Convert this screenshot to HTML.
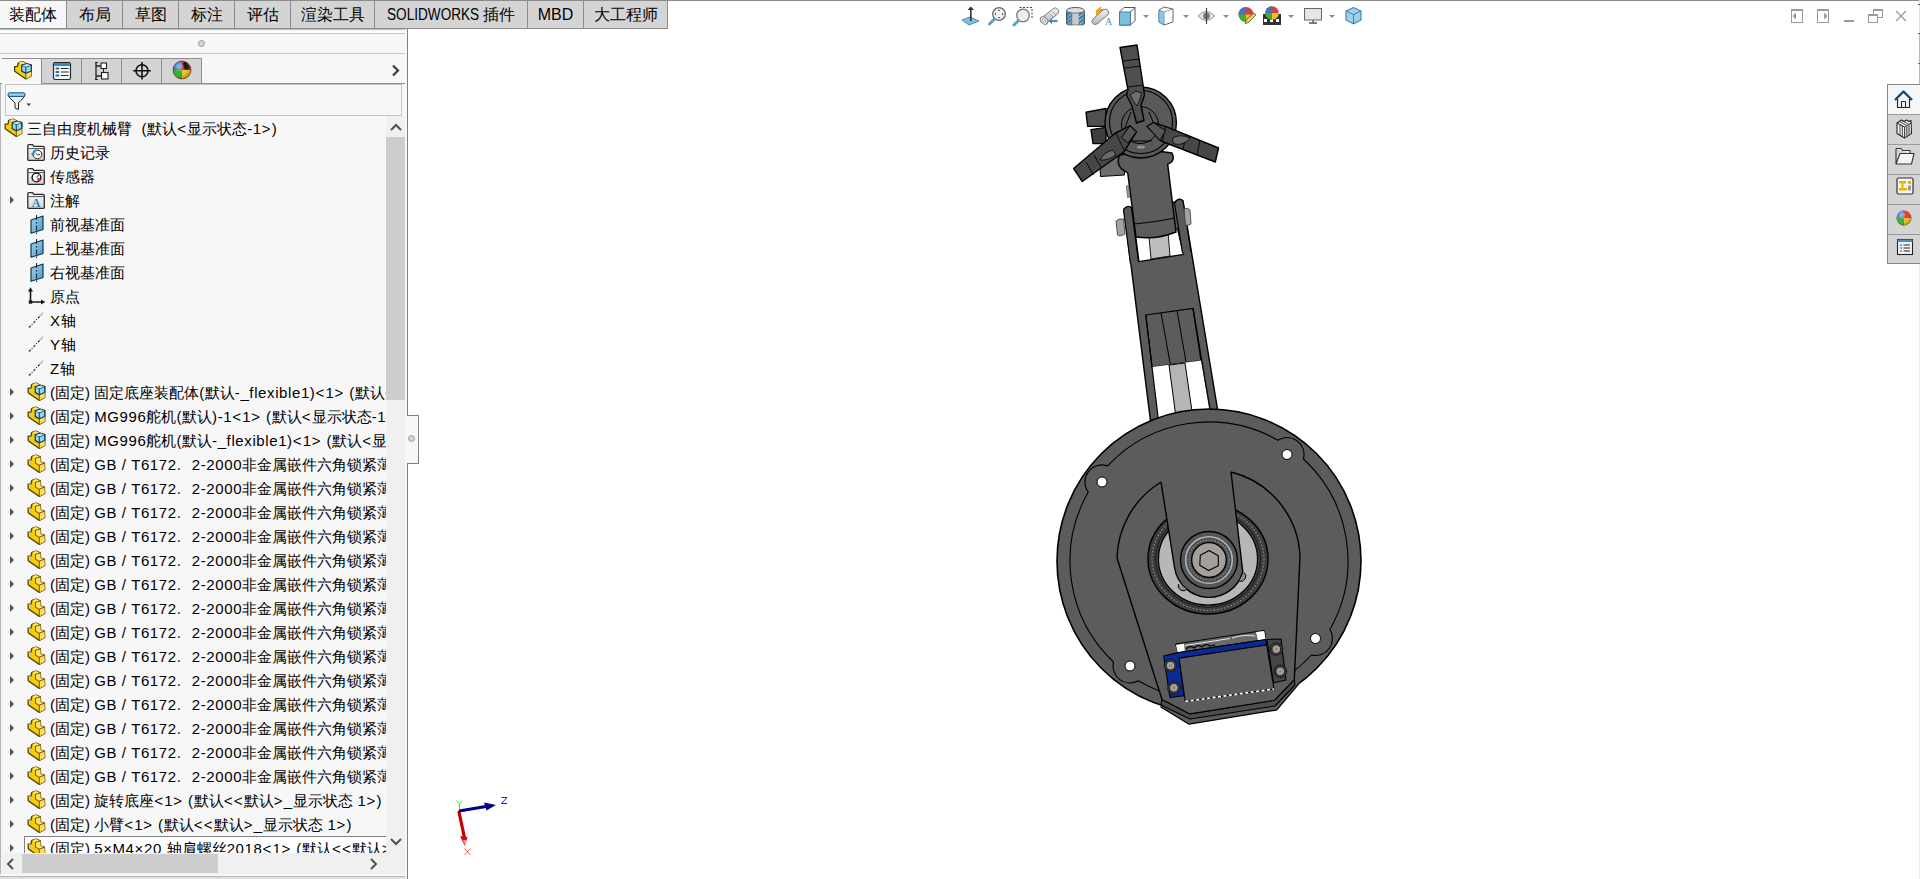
<!DOCTYPE html>
<html><head><meta charset="utf-8">
<style>
*{box-sizing:border-box}
html,body{margin:0;padding:0;width:1920px;height:879px;overflow:hidden;background:#fff;font-family:"Liberation Sans",sans-serif;color:#000}
.abs{position:absolute}
#topline{left:0;top:0;width:1920px;height:1px;background:#8a8a8a}
.tab{position:absolute;top:0;height:29px;background:#d4d4d4;border:1px solid #8c8c8c;border-left:1px solid #8c8c8c;font-size:16px;line-height:27px;text-align:center;white-space:nowrap}
#panel{left:0;top:28px;width:408px;height:851px;background:#f7f7f7;border-right:1px solid #808080;overflow:hidden}
#tree{position:absolute;left:0;top:0;width:386px;height:853px;overflow:hidden}
#tree .t{position:absolute;height:24px;font-size:15px;line-height:24px;white-space:nowrap}
#tree .ar{position:absolute;left:10px;width:0;height:0;border-left:4px solid #555;border-top:4px solid transparent;border-bottom:4px solid transparent}
#tree .ic{position:absolute;overflow:visible}
#tree .focus{position:absolute;left:24px;width:380px;height:30px;background:#fff;border:1px solid #808080}
#tree .l{letter-spacing:0.6px}
#tree .p{letter-spacing:1.3px}
.hl{position:absolute;height:1px}
</style></head><body>
<svg width="0" height="0" style="position:absolute">
<defs>
<linearGradient id="gy" x1="0" y1="0" x2="1" y2="1"><stop offset="0" stop-color="#ffe77a"/><stop offset="1" stop-color="#f2c200"/></linearGradient>
<linearGradient id="gb" x1="0" y1="0" x2="1" y2="1"><stop offset="0" stop-color="#9fd3ee"/><stop offset="1" stop-color="#4f9ac2"/></linearGradient>
<linearGradient id="gf" x1="0" y1="0" x2="0" y2="1"><stop offset="0" stop-color="#fafafa"/><stop offset="1" stop-color="#d8d8d8"/></linearGradient>
<symbol id="i-part" viewBox="0 0 18 18" overflow="visible">
 <path d="M1.1 5.2 L4.1 4.9 L4.4 2.2 L5.2 1.1 L9 0.1 L13.4 1.9 L13.7 7.1 L17.5 8.2 L17.8 14.5 L12.3 17.5 L1.2 9.8 Z" fill="#f3cc10" stroke="#4a3500" stroke-width="1.2" stroke-linejoin="round"/>
 <path d="M5.2 1.1 L9 0.1 L13.4 1.9 L8.5 3.3 Z" fill="#fbe27a"/>
 <path d="M8.5 3.3 L13.4 1.9 L13.7 7.1 L8.5 8.2 Z" fill="#f9e35a"/>
 <path d="M8.5 8.2 L13.7 7.1 L17.5 8.2 L12.3 10.1 Z" fill="#fbe78a"/>
 <path d="M12.3 10.1 L17.5 8.2 L17.8 14.5 L12.3 17.5 Z" fill="#f7df58"/>
 <path d="M1.1 5.2 L2.6 6 L4.1 4.9" fill="#fbe27a"/>
 <path d="M8.5 3.3 L8.5 8.2 L12.3 10.1 L12.3 17.5 M8.5 3.3 L13.4 1.9 M12.3 10.1 L17.5 8.2" fill="none" stroke="#6a4a00" stroke-width="0.9"/>
</symbol>
<symbol id="i-asm" viewBox="0 0 18 18" overflow="visible">
 <path d="M1.1 5.2 L4.1 4.9 L4.4 2.2 L5.2 1.1 L9 0.1 L13.4 2.2 L17.8 3.6 L17.8 14.5 L12.3 17.5 L1.2 9.8 Z" fill="#f3cc10" stroke="#4a3500" stroke-width="1.2" stroke-linejoin="round"/>
 <path d="M5.2 1.1 L9 0.1 L13.4 2.2 L8.2 3.6 Z" fill="#fbe27a"/>
 <path d="M12.3 11.8 L17.8 9.5 L17.8 14.5 L12.3 17.5 Z" fill="#f7df58"/>
 <path d="M12.3 11.8 L12.3 17.5" stroke="#6a4a00" stroke-width="0.9"/>
 <path d="M8.2 3.6 L13.4 2.2 L17.8 3.6 L17.8 9.5 L12.3 11.8 L8.2 9.6 Z" fill="#9dd2ec" stroke="#083d63" stroke-width="1.2" stroke-linejoin="round"/>
 <path d="M8.2 3.6 L12.3 5.6 L17.8 3.6 M12.3 5.6 L12.3 11.8" fill="none" stroke="#083d63" stroke-width="1"/>
 <path d="M8.7 4.2 L13.4 2.6 L17.2 3.7 L12.3 5.2 Z" fill="#c4e6f6"/>
</symbol>
<symbol id="i-folder" viewBox="0 0 18 17">
 <path d="M0.8 2 Q0.8 0.7 2 0.7 L5.6 0.7 L6.8 2.4 L16 2.4 Q17.3 2.4 17.3 3.6 L17.3 15.5 Q17.3 16.3 16.5 16.3 L1.6 16.3 Q0.8 16.3 0.8 15.5 Z" fill="url(#gf)" stroke="#2a2a2a" stroke-width="1.3"/>
 <path d="M1.2 4.6 L17 4.6" stroke="#555" stroke-width="1"/>
</symbol>
<symbol id="i-plane" viewBox="0 0 14 19">
 <path d="M1 5 L13 1 L13 14.5 L1 18.3 Z" fill="url(#gb)" stroke="#083a5a" stroke-width="1.2" stroke-linejoin="round"/>
 <path d="M6.6 0 L6.6 19" stroke="#1a1a1a" stroke-width="1" stroke-dasharray="5 2 1.5 2"/>
</symbol>
<symbol id="i-origin" viewBox="0 0 19 19" overflow="visible">
 <path d="M3.5 3 L3.5 15 L15 15" fill="none" stroke="#1a1a1a" stroke-width="1.6"/>
 <path d="M1 4.5 L3.5 0.3 L6 4.5 Z M14 12.4 L18.3 15 L14 17.6 Z" fill="#1a1a1a"/>
 <rect x="1.8" y="13.3" width="3.4" height="3.4" fill="#1a1a1a"/>
</symbol>
<symbol id="i-axis" viewBox="0 0 16 16">
 <path d="M1 15.5 L15 1" stroke="#222" stroke-width="1.1" stroke-dasharray="2.5 1.5 1 1.5"/>
</symbol>
</defs></svg>

<div id="topline" class="abs"></div>
<div id="panel" class="abs">
  <div class="hl" style="left:0;top:1px;width:405px;background:#a6c3ca"></div>
  <div class="hl" style="left:0;top:2px;width:405px;height:3px;background:#fcfcfc"></div>
  <div class="hl" style="left:0;top:5px;width:405px;background:#c6c6c6"></div>
  <div class="abs" style="left:198px;top:12px;width:7px;height:7px;border-radius:50%;background:#d4d4d4;border:1px solid #9a9a9a"></div>
  <div class="hl" style="left:0;top:25px;width:405px;background:#c6c6c6"></div>
</div>
<div class="abs" style="left:0;top:0;width:408px;height:879px;overflow:hidden">
  <!-- icon tabs -->
  <div class="abs" style="left:2px;top:58px;width:40px;height:26px;background:#f7f7f7;border-top:1px solid #8e8e8e"></div>
  <div class="hl" style="left:0;top:83px;width:2px;background:#8e8e8e"></div>
  <div class="abs" style="left:41px;top:58px;width:41px;height:26px;background:#d4d4d4;border:1px solid #8e8e8e"></div>
  <div class="abs" style="left:81px;top:58px;width:41px;height:26px;background:#d4d4d4;border:1px solid #8e8e8e"></div>
  <div class="abs" style="left:121px;top:58px;width:41px;height:26px;background:#d4d4d4;border:1px solid #8e8e8e"></div>
  <div class="abs" style="left:161px;top:58px;width:41px;height:26px;background:#d4d4d4;border:1px solid #8e8e8e"></div>
  <div class="hl" style="left:41px;top:83px;width:364px;background:#8e8e8e"></div>
  <!-- chevron right -->
  <svg class="abs" style="left:391px;top:63px" width="10" height="14"><path d="M2 2.5 L7 7.5 L2 12.5" fill="none" stroke="#3c3c3c" stroke-width="2.2"/></svg>
  <!-- filter box -->
  <div class="abs" style="left:5px;top:84px;width:397px;height:32px;border:1px solid #c4c4c4;background:#f7f7f7"></div>
  <div class="abs" style="left:0;top:84px;width:1px;height:790px;background:#b4b4b4"></div>
  <!-- tree -->
  <div id="tree" style="position:absolute;left:2px;top:116px;width:384px;height:737px;overflow:hidden">
    <div style="position:absolute;left:-2px;top:-116px;width:386px;height:879px">
<svg class="ic" style="left:4px;top:119px" width="18" height="18"><use href="#i-asm"/></svg><span class="t" style="top:117px;left:27px">三自由度机械臂<span class="l">&nbsp;</span><span class="l"> </span><span class="l">(</span>默认<span class="p">&lt;</span>显示状态<span class="l">-</span><span class="l">1</span><span class="p">&gt;</span><span class="l">)</span></span>
<svg class="ic" style="left:27px;top:144px" width="18" height="17"><use href="#i-folder"/><circle cx="10.5" cy="10.5" r="4.3" fill="#fff" stroke="#222" stroke-width="1"/><path d="M8.5 9 L10.5 10.8 L13 10.8" fill="none" stroke="#222" stroke-width="0.9"/><path d="M6 9.5 A4.5 4.5 0 0 1 9.5 6.2" fill="none" stroke="#2d86b8" stroke-width="1.8"/><path d="M3.8 9.6 L8.2 9.6 L6 12.6 Z" fill="#2d86b8"/></svg><span class="t" style="top:141px;left:50px">历史记录</span>
<svg class="ic" style="left:27px;top:168px" width="18" height="17"><use href="#i-folder"/><circle cx="9.5" cy="9.5" r="4.4" fill="#fff" stroke="#111" stroke-width="1.4"/><path d="M9.5 9.5 L12.3 6.3" stroke="#2d86b8" stroke-width="1.2"/><circle cx="11.8" cy="11.6" r="1.6" fill="#e8220a"/></svg><span class="t" style="top:165px;left:50px">传感器</span>
<svg class="ic" style="left:27px;top:192px" width="18" height="17"><use href="#i-folder"/><text x="9.2" y="15" font-family="Liberation Serif" font-size="12" font-weight="bold" fill="#2a7fb0" text-anchor="middle">A</text></svg><b class="ar" style="top:196px"></b><span class="t" style="top:189px;left:50px">注解</span>
<svg class="ic" style="left:30px;top:215px" width="14" height="19"><use href="#i-plane"/></svg><span class="t" style="top:213px;left:50px">前视基准面</span>
<svg class="ic" style="left:30px;top:239px" width="14" height="19"><use href="#i-plane"/></svg><span class="t" style="top:237px;left:50px">上视基准面</span>
<svg class="ic" style="left:30px;top:263px" width="14" height="19"><use href="#i-plane"/></svg><span class="t" style="top:261px;left:50px">右视基准面</span>
<svg class="ic" style="left:27px;top:287px" width="19" height="19"><use href="#i-origin"/></svg><span class="t" style="top:285px;left:50px">原点</span>
<svg class="ic" style="left:28px;top:312px" width="16" height="16"><use href="#i-axis"/></svg><span class="t" style="top:309px;left:50px"><span class="l">X</span>轴</span>
<svg class="ic" style="left:28px;top:336px" width="16" height="16"><use href="#i-axis"/></svg><span class="t" style="top:333px;left:50px"><span class="l">Y</span>轴</span>
<svg class="ic" style="left:28px;top:360px" width="16" height="16"><use href="#i-axis"/></svg><span class="t" style="top:357px;left:50px"><span class="l">Z</span>轴</span>
<svg class="ic" style="left:27px;top:383px" width="18" height="18"><use href="#i-asm"/></svg><b class="ar" style="top:388px"></b><span class="t" style="top:381px;left:50px">(固定) 固定底座装配体<span class="l">(</span>默认<span class="l">-</span><span class="l">_</span><span class="l">f</span><span class="l">l</span><span class="l">e</span><span class="l">x</span><span class="l">i</span><span class="l">b</span><span class="l">l</span><span class="l">e</span><span class="l">1</span><span class="l">)</span><span class="p">&lt;</span><span class="l">1</span><span class="p">&gt;</span><span class="l"> </span><span class="l">(</span>默认<span class="p">&lt;</span>显示状态<span class="l">-</span><span class="l">1</span><span class="p">&gt;</span><span class="l">)</span></span>
<svg class="ic" style="left:27px;top:407px" width="18" height="18"><use href="#i-asm"/></svg><b class="ar" style="top:412px"></b><span class="t" style="top:405px;left:50px">(固定) <span class="l">M</span><span class="l">G</span><span class="l">9</span><span class="l">9</span><span class="l">6</span>舵机<span class="l">(</span>默认<span class="l">)</span><span class="l">-</span><span class="l">1</span><span class="p">&lt;</span><span class="l">1</span><span class="p">&gt;</span><span class="l"> </span><span class="l">(</span>默认<span class="p">&lt;</span>显示状态<span class="l">-</span><span class="l">1</span><span class="p">&gt;</span><span class="l">)</span></span>
<svg class="ic" style="left:27px;top:431px" width="18" height="18"><use href="#i-asm"/></svg><b class="ar" style="top:436px"></b><span class="t" style="top:429px;left:50px">(固定) <span class="l">M</span><span class="l">G</span><span class="l">9</span><span class="l">9</span><span class="l">6</span>舵机<span class="l">(</span>默认<span class="l">-</span><span class="l">_</span><span class="l">f</span><span class="l">l</span><span class="l">e</span><span class="l">x</span><span class="l">i</span><span class="l">b</span><span class="l">l</span><span class="l">e</span><span class="l">1</span><span class="l">)</span><span class="p">&lt;</span><span class="l">1</span><span class="p">&gt;</span><span class="l"> </span><span class="l">(</span>默认<span class="p">&lt;</span>显示状态<span class="l">-</span><span class="l">1</span><span class="p">&gt;</span><span class="l">)</span></span>
<svg class="ic" style="left:27px;top:455px" width="18" height="18"><use href="#i-part"/></svg><b class="ar" style="top:460px"></b><span class="t" style="top:453px;left:50px">(固定) <span class="l">G</span><span class="l">B</span><span class="l"> </span><span class="l">/</span><span class="l"> </span><span class="l">T</span><span class="l">6</span><span class="l">1</span><span class="l">7</span><span class="l">2</span><span class="l" style="display:inline-block;width:15px">.</span><span class="l">2</span><span class="l">-</span><span class="l">2</span><span class="l">0</span><span class="l">0</span><span class="l">0</span>非金属嵌件六角锁紧薄螺母</span>
<svg class="ic" style="left:27px;top:479px" width="18" height="18"><use href="#i-part"/></svg><b class="ar" style="top:484px"></b><span class="t" style="top:477px;left:50px">(固定) <span class="l">G</span><span class="l">B</span><span class="l"> </span><span class="l">/</span><span class="l"> </span><span class="l">T</span><span class="l">6</span><span class="l">1</span><span class="l">7</span><span class="l">2</span><span class="l" style="display:inline-block;width:15px">.</span><span class="l">2</span><span class="l">-</span><span class="l">2</span><span class="l">0</span><span class="l">0</span><span class="l">0</span>非金属嵌件六角锁紧薄螺母</span>
<svg class="ic" style="left:27px;top:503px" width="18" height="18"><use href="#i-part"/></svg><b class="ar" style="top:508px"></b><span class="t" style="top:501px;left:50px">(固定) <span class="l">G</span><span class="l">B</span><span class="l"> </span><span class="l">/</span><span class="l"> </span><span class="l">T</span><span class="l">6</span><span class="l">1</span><span class="l">7</span><span class="l">2</span><span class="l" style="display:inline-block;width:15px">.</span><span class="l">2</span><span class="l">-</span><span class="l">2</span><span class="l">0</span><span class="l">0</span><span class="l">0</span>非金属嵌件六角锁紧薄螺母</span>
<svg class="ic" style="left:27px;top:527px" width="18" height="18"><use href="#i-part"/></svg><b class="ar" style="top:532px"></b><span class="t" style="top:525px;left:50px">(固定) <span class="l">G</span><span class="l">B</span><span class="l"> </span><span class="l">/</span><span class="l"> </span><span class="l">T</span><span class="l">6</span><span class="l">1</span><span class="l">7</span><span class="l">2</span><span class="l" style="display:inline-block;width:15px">.</span><span class="l">2</span><span class="l">-</span><span class="l">2</span><span class="l">0</span><span class="l">0</span><span class="l">0</span>非金属嵌件六角锁紧薄螺母</span>
<svg class="ic" style="left:27px;top:551px" width="18" height="18"><use href="#i-part"/></svg><b class="ar" style="top:556px"></b><span class="t" style="top:549px;left:50px">(固定) <span class="l">G</span><span class="l">B</span><span class="l"> </span><span class="l">/</span><span class="l"> </span><span class="l">T</span><span class="l">6</span><span class="l">1</span><span class="l">7</span><span class="l">2</span><span class="l" style="display:inline-block;width:15px">.</span><span class="l">2</span><span class="l">-</span><span class="l">2</span><span class="l">0</span><span class="l">0</span><span class="l">0</span>非金属嵌件六角锁紧薄螺母</span>
<svg class="ic" style="left:27px;top:575px" width="18" height="18"><use href="#i-part"/></svg><b class="ar" style="top:580px"></b><span class="t" style="top:573px;left:50px">(固定) <span class="l">G</span><span class="l">B</span><span class="l"> </span><span class="l">/</span><span class="l"> </span><span class="l">T</span><span class="l">6</span><span class="l">1</span><span class="l">7</span><span class="l">2</span><span class="l" style="display:inline-block;width:15px">.</span><span class="l">2</span><span class="l">-</span><span class="l">2</span><span class="l">0</span><span class="l">0</span><span class="l">0</span>非金属嵌件六角锁紧薄螺母</span>
<svg class="ic" style="left:27px;top:599px" width="18" height="18"><use href="#i-part"/></svg><b class="ar" style="top:604px"></b><span class="t" style="top:597px;left:50px">(固定) <span class="l">G</span><span class="l">B</span><span class="l"> </span><span class="l">/</span><span class="l"> </span><span class="l">T</span><span class="l">6</span><span class="l">1</span><span class="l">7</span><span class="l">2</span><span class="l" style="display:inline-block;width:15px">.</span><span class="l">2</span><span class="l">-</span><span class="l">2</span><span class="l">0</span><span class="l">0</span><span class="l">0</span>非金属嵌件六角锁紧薄螺母</span>
<svg class="ic" style="left:27px;top:623px" width="18" height="18"><use href="#i-part"/></svg><b class="ar" style="top:628px"></b><span class="t" style="top:621px;left:50px">(固定) <span class="l">G</span><span class="l">B</span><span class="l"> </span><span class="l">/</span><span class="l"> </span><span class="l">T</span><span class="l">6</span><span class="l">1</span><span class="l">7</span><span class="l">2</span><span class="l" style="display:inline-block;width:15px">.</span><span class="l">2</span><span class="l">-</span><span class="l">2</span><span class="l">0</span><span class="l">0</span><span class="l">0</span>非金属嵌件六角锁紧薄螺母</span>
<svg class="ic" style="left:27px;top:647px" width="18" height="18"><use href="#i-part"/></svg><b class="ar" style="top:652px"></b><span class="t" style="top:645px;left:50px">(固定) <span class="l">G</span><span class="l">B</span><span class="l"> </span><span class="l">/</span><span class="l"> </span><span class="l">T</span><span class="l">6</span><span class="l">1</span><span class="l">7</span><span class="l">2</span><span class="l" style="display:inline-block;width:15px">.</span><span class="l">2</span><span class="l">-</span><span class="l">2</span><span class="l">0</span><span class="l">0</span><span class="l">0</span>非金属嵌件六角锁紧薄螺母</span>
<svg class="ic" style="left:27px;top:671px" width="18" height="18"><use href="#i-part"/></svg><b class="ar" style="top:676px"></b><span class="t" style="top:669px;left:50px">(固定) <span class="l">G</span><span class="l">B</span><span class="l"> </span><span class="l">/</span><span class="l"> </span><span class="l">T</span><span class="l">6</span><span class="l">1</span><span class="l">7</span><span class="l">2</span><span class="l" style="display:inline-block;width:15px">.</span><span class="l">2</span><span class="l">-</span><span class="l">2</span><span class="l">0</span><span class="l">0</span><span class="l">0</span>非金属嵌件六角锁紧薄螺母</span>
<svg class="ic" style="left:27px;top:695px" width="18" height="18"><use href="#i-part"/></svg><b class="ar" style="top:700px"></b><span class="t" style="top:693px;left:50px">(固定) <span class="l">G</span><span class="l">B</span><span class="l"> </span><span class="l">/</span><span class="l"> </span><span class="l">T</span><span class="l">6</span><span class="l">1</span><span class="l">7</span><span class="l">2</span><span class="l" style="display:inline-block;width:15px">.</span><span class="l">2</span><span class="l">-</span><span class="l">2</span><span class="l">0</span><span class="l">0</span><span class="l">0</span>非金属嵌件六角锁紧薄螺母</span>
<svg class="ic" style="left:27px;top:719px" width="18" height="18"><use href="#i-part"/></svg><b class="ar" style="top:724px"></b><span class="t" style="top:717px;left:50px">(固定) <span class="l">G</span><span class="l">B</span><span class="l"> </span><span class="l">/</span><span class="l"> </span><span class="l">T</span><span class="l">6</span><span class="l">1</span><span class="l">7</span><span class="l">2</span><span class="l" style="display:inline-block;width:15px">.</span><span class="l">2</span><span class="l">-</span><span class="l">2</span><span class="l">0</span><span class="l">0</span><span class="l">0</span>非金属嵌件六角锁紧薄螺母</span>
<svg class="ic" style="left:27px;top:743px" width="18" height="18"><use href="#i-part"/></svg><b class="ar" style="top:748px"></b><span class="t" style="top:741px;left:50px">(固定) <span class="l">G</span><span class="l">B</span><span class="l"> </span><span class="l">/</span><span class="l"> </span><span class="l">T</span><span class="l">6</span><span class="l">1</span><span class="l">7</span><span class="l">2</span><span class="l" style="display:inline-block;width:15px">.</span><span class="l">2</span><span class="l">-</span><span class="l">2</span><span class="l">0</span><span class="l">0</span><span class="l">0</span>非金属嵌件六角锁紧薄螺母</span>
<svg class="ic" style="left:27px;top:767px" width="18" height="18"><use href="#i-part"/></svg><b class="ar" style="top:772px"></b><span class="t" style="top:765px;left:50px">(固定) <span class="l">G</span><span class="l">B</span><span class="l"> </span><span class="l">/</span><span class="l"> </span><span class="l">T</span><span class="l">6</span><span class="l">1</span><span class="l">7</span><span class="l">2</span><span class="l" style="display:inline-block;width:15px">.</span><span class="l">2</span><span class="l">-</span><span class="l">2</span><span class="l">0</span><span class="l">0</span><span class="l">0</span>非金属嵌件六角锁紧薄螺母</span>
<svg class="ic" style="left:27px;top:791px" width="18" height="18"><use href="#i-part"/></svg><b class="ar" style="top:796px"></b><span class="t" style="top:789px;left:50px">(固定) 旋转底座<span class="p">&lt;</span><span class="l">1</span><span class="p">&gt;</span><span class="l"> </span><span class="l">(</span>默认<span class="p">&lt;</span><span class="p">&lt;</span>默认<span class="p">&gt;</span><span class="l">_</span>显示状态<span class="l"> </span><span class="l">1</span><span class="p">&gt;</span><span class="l">)</span></span>
<svg class="ic" style="left:27px;top:815px" width="18" height="18"><use href="#i-part"/></svg><b class="ar" style="top:820px"></b><span class="t" style="top:813px;left:50px">(固定) 小臂<span class="p">&lt;</span><span class="l">1</span><span class="p">&gt;</span><span class="l"> </span><span class="l">(</span>默认<span class="p">&lt;</span><span class="p">&lt;</span>默认<span class="p">&gt;</span><span class="l">_</span>显示状态<span class="l"> </span><span class="l">1</span><span class="p">&gt;</span><span class="l">)</span></span>
<div class="focus" style="top:836px"></div><svg class="ic" style="left:27px;top:839px" width="18" height="18"><use href="#i-part"/></svg><b class="ar" style="top:844px"></b><span class="t" style="top:837px;left:50px">(固定) <span class="l">5</span><span class="l">×</span><span class="l">M</span><span class="l">4</span><span class="l">×</span><span class="l">2</span><span class="l">0</span><span class="l"> </span>轴肩螺丝<span class="l">2</span><span class="l">0</span><span class="l">1</span><span class="l">8</span><span class="p">&lt;</span><span class="l">1</span><span class="p">&gt;</span><span class="l"> </span><span class="l">(</span>默认<span class="p">&lt;</span><span class="p">&lt;</span>默认<span class="p">&gt;</span><span class="l">_</span>显示状态<span class="l"> </span><span class="l">1</span><span class="p">&gt;</span><span class="l">)</span></span>
    </div>
  </div>
  <!-- vscroll -->
  <div class="abs" style="left:386px;top:116px;width:19px;height:737px;background:#f0f0f0"></div>
  <div class="abs" style="left:386px;top:137px;width:19px;height:263px;background:#cdcdcd"></div>
  <svg class="abs" style="left:389px;top:122px" width="14" height="10"><path d="M2 8 L7 3 L12 8" fill="none" stroke="#505050" stroke-width="2"/></svg>
  <svg class="abs" style="left:389px;top:837px" width="14" height="10"><path d="M2 2 L7 7 L12 2" fill="none" stroke="#505050" stroke-width="2"/></svg>
  <!-- hscroll -->
  <div class="abs" style="left:2px;top:853px;width:403px;height:21px;background:#f0f0f0"></div>
  <div class="abs" style="left:22px;top:854px;width:196px;height:19px;background:#cdcdcd"></div>
  <svg class="abs" style="left:5px;top:857px" width="10" height="14"><path d="M8 2 L3 7 L8 12" fill="none" stroke="#505050" stroke-width="2"/></svg>
  <svg class="abs" style="left:369px;top:857px" width="10" height="14"><path d="M2 2 L7 7 L2 12" fill="none" stroke="#505050" stroke-width="2"/></svg>
  <div class="hl" style="left:0;top:876px;width:405px;background:#b8b8b8"></div>
  <div class="hl" style="left:0;top:877px;width:405px;height:2px;background:#e0e0e0"></div>
</div>
<!-- panel handle -->
<div class="abs" style="left:407px;top:415px;width:12px;height:49px;background:#f7f7f7;border:1px solid #808080;border-left:none"></div>
<div class="abs" style="left:408px;top:435px;width:7px;height:7px;border-radius:50%;background:#d4d4d4;border:1px solid #a0a0a0"></div>

<!-- tabs -->
<div class="tab" style="left:0;width:67px;background:#f7f7f7;border-left:none">装配体</div>
<div class="tab" style="left:66px;width:57px">布局</div>
<div class="tab" style="left:122px;width:57px">草图</div>
<div class="tab" style="left:178px;width:57px">标注</div>
<div class="tab" style="left:234px;width:57px">评估</div>
<div class="tab" style="left:290px;width:85px">渲染工具</div>
<div class="tab" style="left:374px;width:154px"><span style="display:inline-block;width:91px;height:20px;vertical-align:top"><span style="display:inline-block;transform:scaleX(.85);transform-origin:0 0">SOLIDWORKS</span></span> 插件</div>
<div class="tab" style="left:527px;width:57px">MBD</div>
<div class="tab" style="left:583px;width:85px">大工程师</div>
<!-- top view toolbar -->
<svg class="abs" style="left:950px;top:0" width="420" height="32" viewBox="0 0 420 32">
 <defs>
  <linearGradient id="tbb" x1="0" y1="0" x2="1" y2="1"><stop offset="0" stop-color="#bfe3f3"/><stop offset="1" stop-color="#5fa7cc"/></linearGradient>
  <linearGradient id="tbg" x1="0" y1="0" x2="0" y2="1"><stop offset="0" stop-color="#f4f4f4"/><stop offset="1" stop-color="#b8b8b8"/></linearGradient>
 </defs>
 <!-- 1 view orientation: arrow on plane -->
 <path d="M12 20 L20 17 L29 21 L19 25 Z" fill="#7cc0e0" stroke="#4b8fb5" stroke-width="1"/>
 <path d="M20.8 21 L20.8 8" stroke="#333" stroke-width="1.6"/>
 <path d="M17.5 10 L20.8 6.5 L24 10 Z" fill="#333"/>
 <!-- 2 zoom to fit -->
 <circle cx="49" cy="14" r="6.3" fill="#eef3f6" stroke="#666" stroke-width="1.3"/>
 <path d="M44.5 19 L39.5 24" stroke="#5a9fc4" stroke-width="3" stroke-linecap="round"/>
 <path d="M49 9.5 L47.5 11 L50.5 11 Z M49 18.5 L47.5 17 L50.5 17 Z M44.5 14 L46 12.5 L46 15.5 Z M53.5 14 L52 12.5 L52 15.5 Z" fill="#555"/>
 <!-- 3 zoom area -->
 <path d="M69.5 7.5 L82 7.5 L82 19.5" fill="none" stroke="#444" stroke-width="1" stroke-dasharray="2 1.5"/>
 <circle cx="73" cy="15.5" r="6.3" fill="#e8eef2" stroke="#777" stroke-width="1.3"/>
 <path d="M68.5 20.5 L64 25" stroke="#5a9fc4" stroke-width="3" stroke-linecap="round"/>
 <!-- 4 previous view (telescope) -->
 <path d="M92 17.5 L103.5 8.5 Q106 7 107.5 9 L108.5 10.5 Q109.5 12.5 107.5 14 L96 23.5 Z" fill="url(#tbg)" stroke="#777" stroke-width="1"/>
 <ellipse cx="94" cy="20.5" rx="3.2" ry="4.3" transform="rotate(-45 94 20.5)" fill="#e6e6e6" stroke="#777" stroke-width="1"/>
 <ellipse cx="94" cy="20.5" rx="1.4" ry="2" transform="rotate(-45 94 20.5)" fill="none" stroke="#999" stroke-width="0.8"/>
 <path d="M99.5 14 L104 18 M102.5 11.5 L106 15" stroke="#999" stroke-width="0.8"/>
 <path d="M100 21 L107.5 21" stroke="#4a90b8" stroke-width="2.2"/>
 <path d="M98.5 21 L102 17.8 L102 24.2 Z" fill="#4a90b8"/>
 <!-- 5 section view -->
 <path d="M116.5 11.5 Q116.5 7.5 125.5 7.5 Q134.5 7.5 134.5 11.5 L134.5 23.5 Q134.5 24.8 132 24.8 L119 24.8 Q116.5 24.8 116.5 23.5 Z" fill="#dedede" stroke="#555" stroke-width="1"/>
 <path d="M116.8 12 L122.5 12.8 L122.5 24.5 L117 24.5 Z" fill="#3d7fa6"/>
 <path d="M128.5 12.8 L134.2 12 L134.2 24.5 L128.5 24.5 Z" fill="#3d7fa6"/>
 <path d="M117.5 17 L121.5 13.5 M117.5 21 L121.5 17.5 M118.5 24 L121.5 21.5 M129 17 L133.5 13.5 M129 21 L133.5 17.5 M130 24 L133.5 21.5" stroke="#b9dcec" stroke-width="0.9"/>
 <path d="M122.5 12.8 Q125.5 11.5 128.5 12.8 L128.5 24.5 L122.5 24.5 Z" fill="#c8c8c8"/>
 <path d="M117 11.5 Q125.5 15 134 11.5" fill="none" stroke="#666" stroke-width="0.8"/>
 <!-- 6 dynamic annotation -->
 <path d="M143 19 L153 10 Q156 8 158 10.5 Q159.5 13 157.5 15 L147 24 Q144 25.5 142.5 23 Q141 21 143 19 Z" fill="url(#tbg)" stroke="#777" stroke-width="1"/>
 <path d="M146 11 L151 7 L149 10.5 L153 9 L146 15" fill="#f3b400" stroke="#e07a00" stroke-width="0.8"/>
 <text x="155" y="25" font-family="Liberation Serif" font-size="10" fill="#4a90b8">A</text>
 <!-- 7 view cube -->
 <path d="M169.5 12 L174 7.5 L185 7.5 L185 20.5 L180.5 25 L169.5 25 Z" fill="#fff" stroke="#555" stroke-width="1"/>
 <rect x="169.5" y="12" width="11" height="13" fill="#7fbedc" stroke="#3f7fa5" stroke-width="1"/>
 <path d="M180.5 12 L185 7.5" stroke="#555" stroke-width="1"/>
 <path d="M193 15 L199 15 L196 18 Z" fill="#8a8a8a"/>
 <!-- 8 display style -->
 <path d="M209 10 L214 7 L223 9 L223 22 L214 25 L209 22 Z" fill="#fff" stroke="#666" stroke-width="1"/>
 <path d="M209 10 L214 12 L214 25 L209 22 Z" fill="#8cc8e4" stroke="#4f8fb4" stroke-width="0.8"/>
 <path d="M214 12 L223 9" stroke="#888" stroke-width="0.8"/>
 <path d="M233 15 L239 15 L236 18 Z" fill="#8a8a8a"/>
 <!-- 9 hide/show eye -->
 <path d="M248 16 Q256 7 265 16 Q256 25 248 16 Z" fill="#e6e6e6" stroke="#9a9a9a" stroke-width="1"/>
 <circle cx="256.5" cy="16" r="3.5" fill="#808080"/>
 <path d="M256.5 8 L256.5 24" stroke="#444" stroke-width="1.2"/>
 <path d="M273 15 L279 15 L276 18 Z" fill="#8a8a8a"/>
 <!-- 10 edit appearance -->
 <circle cx="296" cy="14.5" r="7.5" fill="#d04040"/>
 <path d="M296 14.5 L288.5 14.5 A7.5 7.5 0 0 1 296 7 Z" fill="#3a78d0"/>
 <path d="M296 14.5 L288.5 14.5 A7.5 7.5 0 0 0 296 22 Z" fill="#39b030"/>
 <path d="M296 14.5 L303.5 14.5 A7.5 7.5 0 0 1 296 22 Z" fill="#e8c020"/>
 <path d="M295 24 L297 19 L304 13 L306 15 L299 22 Z" fill="#f0d060" stroke="#555" stroke-width="0.8"/>
 <!-- 11 scene -->
 <rect x="313" y="14" width="18" height="11" fill="#333"/>
 <path d="M314 19 L317 19 L317 22 L314 22 Z M320 19 L323 19 L323 22 L320 22 Z M326 19 L329 19 L329 22 L326 22 Z" fill="#fff"/>
 <circle cx="322" cy="13" r="6.8" fill="#d04040"/>
 <path d="M322 13 L315.2 13 A6.8 6.8 0 0 1 322 6.2 Z" fill="#3a78d0"/>
 <path d="M322 13 L315.2 13 A6.8 6.8 0 0 0 322 19.8 Z" fill="#39b030"/>
 <path d="M322 13 L328.8 13 A6.8 6.8 0 0 1 322 19.8 Z" fill="#e8c020"/>
 <path d="M338 15 L344 15 L341 18 Z" fill="#8a8a8a"/>
 <!-- 12 monitor -->
 <rect x="354.5" y="8.5" width="17" height="11.5" fill="#e6e6e6" stroke="#666" stroke-width="1"/>
 <path d="M363 20 L363 22.5 M359 23 L367 23" stroke="#555" stroke-width="1.3"/>
 <path d="M379 15 L385 15 L382 18 Z" fill="#8a8a8a"/>
 <!-- 13 cube -->
 <path d="M396 11 L403.5 7.5 L411 11 L411 20 L403.5 24 L396 20 Z" fill="#9fd0e8" stroke="#3f7fa5" stroke-width="1.1"/>
 <path d="M396 11 L403.5 14.5 L411 11 M403.5 14.5 L403.5 24" fill="none" stroke="#3f7fa5" stroke-width="1"/>
</svg>
<!-- window controls -->
<svg class="abs" style="left:1770px;top:0" width="150" height="32" viewBox="0 0 150 32">
 <g fill="none" stroke="#999" stroke-width="1">
  <rect x="21.5" y="9.5" width="11" height="13"/><rect x="47.5" y="9.5" width="11" height="13"/>
  <rect x="103.5" y="9.5" width="9" height="8"/>
 </g>
 <rect x="98.5" y="14.5" width="9" height="8" fill="#fff" stroke="#999" stroke-width="1"/>
 <g fill="#999">
  <rect x="21" y="9" width="12" height="2"/><rect x="47" y="9" width="12" height="2"/>
  <rect x="98" y="14" width="10" height="2"/><rect x="103" y="9" width="10" height="2"/>
  <path d="M26 12.5 L22.5 16 L26 19.5 Z M54 12.5 L57.5 16 L54 19.5 Z"/>
  <rect x="74" y="20" width="10" height="2"/>
 </g>
 <path d="M126 11 L136 21 M136 11 L126 21" stroke="#999" stroke-width="1.3"/>
</svg>
<!-- right task pane -->
<div class="abs" style="left:1919px;top:264px;width:1px;height:615px;background:#ececec"></div>
<div class="abs" style="left:1887px;top:84px;width:33px;height:180px;background:#d4d4d4;border:1px solid #888;border-right:none"></div>
<div class="abs" style="left:1888px;top:85px;width:32px;height:29px;background:#f6f6f6"></div>
<div class="abs" style="left:1888px;top:114px;width:32px;height:1px;background:#999"></div>
<div class="abs" style="left:1888px;top:144px;width:32px;height:1px;background:#999"></div>
<div class="abs" style="left:1888px;top:174px;width:32px;height:1px;background:#999"></div>
<div class="abs" style="left:1888px;top:204px;width:32px;height:1px;background:#999"></div>
<div class="abs" style="left:1888px;top:234px;width:32px;height:1px;background:#999"></div>
<div class="abs" style="left:1919px;top:0;width:1px;height:33px;background:#e0e0e0"></div>
<div class="abs" style="left:1919px;top:33px;width:1px;height:51px;background:#b8b8b8"></div>
<div class="abs" style="left:1918px;top:4px;width:2px;height:1px;background:#555"></div>
<div class="abs" style="left:1918px;top:33px;width:2px;height:1px;background:#666"></div>
<div class="abs" style="left:1918px;top:63px;width:2px;height:1px;background:#666"></div>
<svg class="abs" style="left:1888px;top:84px" width="32" height="180" viewBox="0 0 32 180">
 <!-- home -->
 <path d="M7 16 L15.5 7.5 L24 16" fill="none" stroke="#0f4c70" stroke-width="2.4" stroke-linejoin="round"/>
 <path d="M9.5 15 L9.5 23.5 L21.5 23.5 L21.5 15" fill="#f0f0f0" stroke="#222" stroke-width="1.1"/>
 <path d="M13.5 23.5 L13.5 17.5 L17.5 17.5 L17.5 23.5" fill="none" stroke="#222" stroke-width="1"/>
 <!-- books -->
 <path d="M9 39 L13.5 36 L16 37.5 L18.5 36 L21 37.5 L23 36.5 L23.5 49.5 L16.5 54 L9 49.5 Z" fill="#f4f4f4" stroke="#222" stroke-width="1.1" stroke-linejoin="round"/>
 <path d="M9 39 L16.5 43 L16.5 54 M16.5 43 L23.3 39" fill="none" stroke="#222" stroke-width="1"/>
 <path d="M11.5 37.5 L18.5 41.5 M14 36.8 L20.8 40.3 M12 40.3 L12 51 M14.3 41.5 L14.3 52.5" fill="none" stroke="#333" stroke-width="0.9"/>
 <path d="M16.8 43.3 L23 40 L23 49.3 L16.8 53.3 Z" fill="#d0d0d0"/>
 <path d="M18.8 42.3 L18.8 52 M21 41 L21 50.5" stroke="#333" stroke-width="0.8"/>
 <!-- folder -->
 <path d="M8 64.5 L8 80 L23.5 80 L26 69.5 L12 69.5 L8 80 M8 64.5 L13 64.5 L14.5 66.5 L22 66.5 L22 69.5" fill="#f4f4f4" stroke="#333" stroke-width="1.1" stroke-linejoin="round"/>
 <!-- design library -->
 <rect x="9" y="94" width="16" height="16" rx="1.5" fill="#f4f4f4" stroke="#333" stroke-width="1.2"/>
 <path d="M11 97 L18 97 L18 99.5 L15.5 99.5 L15.5 104 L19 104 L19 106.5 L11 106.5 L11 104 L13.5 104 L13.5 99.5 L11 99.5 Z" fill="#e7b400"/>
 <rect x="20" y="97" width="3" height="3" fill="#e7b400"/><rect x="20" y="101.5" width="3" height="5" fill="#999"/>
 <!-- appearance ball -->
 <circle cx="16" cy="134" r="7.5" fill="#d83a3a"/>
 <path d="M16 134 L8.5 134 A7.5 7.5 0 0 1 16 126.5 Z" fill="#3b7ad6"/>
 <path d="M16 134 L8.5 134 A7.5 7.5 0 0 0 16 141.5 Z" fill="#33b02c"/>
 <path d="M16 134 L23.5 134 A7.5 7.5 0 0 1 16 141.5 Z" fill="#ecc51e"/>
 <circle cx="16" cy="134" r="7.5" fill="url(#ballhl)"/>
 <!-- custom properties -->
 <rect x="9.5" y="155.5" width="15" height="15" fill="#f4f4f4" stroke="#222" stroke-width="1.1"/>
 <rect x="9.5" y="155.5" width="15" height="2.5" fill="#4a90b8"/>
 <path d="M12 161 L14 161 M12 164 L14 164 M12 167 L14 167" stroke="#4a90b8" stroke-width="1.6"/>
 <path d="M15.5 161 L22 161 M15.5 164 L22 164 M15.5 167 L22 167" stroke="#222" stroke-width="1.1"/>
</svg>

<!-- icon tab icons -->
<svg class="abs" style="left:0;top:56px" width="210" height="60" viewBox="0 56 210 60">
 <use href="#i-asm" x="13.5" y="61.5" width="18" height="18"/>
 <!-- property manager -->
 <rect x="53.5" y="62.5" width="17" height="17" rx="1.5" fill="#f6f6f6" stroke="#1b2e3c" stroke-width="1.2"/>
 <rect x="54" y="63" width="16" height="3" fill="#3f86b4"/>
 <path d="M55.8 68.5 L59 68.5 M55.8 72 L59 72 M55.8 75.5 L59 75.5" stroke="#3f86b4" stroke-width="2"/>
 <path d="M55.3 68.5 L59.5 68.5 M55.3 72 L59.5 72 M55.3 75.5 L59.5 75.5" stroke="#1b2e3c" stroke-width="0.5" fill="none"/>
 <path d="M61 68.5 L68.5 68.5 M61 72 L68.5 72 M61 75.5 L68.5 75.5" stroke="#1b2e3c" stroke-width="1.2"/>
 <!-- configuration manager -->
 <path d="M96 62.5 L96 79.5 M96 66 L101 66 M96 76 L101 76" stroke="#222" stroke-width="1.3" fill="none"/>
 <path d="M95 62.5 L98 62.5 M95 79.5 L98 79.5" stroke="#222" stroke-width="1.2"/>
 <rect x="101" y="63" width="5.5" height="5.5" fill="#fff" stroke="#222" stroke-width="1.1"/>
 <rect x="101.5" y="72.5" width="6.5" height="6.5" fill="#fff" stroke="#222" stroke-width="1.1"/>
 <path d="M103.5 68.5 L103.5 72.5" stroke="#222" stroke-width="1"/>
 <!-- dimxpert crosshair -->
 <circle cx="142" cy="70.8" r="6" fill="none" stroke="#111" stroke-width="1.6"/>
 <path d="M142 62 L142 79.6 M133.2 70.8 L150.8 70.8" stroke="#111" stroke-width="1.6"/>
 <!-- display manager ball -->
 <circle cx="182" cy="70" r="9" fill="#d62020"/>
 <path d="M182 70 L173 70 A9 9 0 0 1 182 61 Z" fill="#2d6fd1"/>
 <path d="M182 70 L173 70 A9 9 0 0 0 182 79 Z" fill="#2fae2a"/>
 <path d="M182 70 L191 70 A9 9 0 0 1 182 79 Z" fill="#f0c419"/>
 <ellipse cx="186" cy="66" rx="2.6" ry="4.2" transform="rotate(-35 186 66)" fill="#111"/>
 <defs><radialGradient id="ballhl" cx="0.35" cy="0.3" r="0.75"><stop offset="0" stop-color="#fff" stop-opacity="0.55"/><stop offset="0.45" stop-color="#fff" stop-opacity="0"/><stop offset="1" stop-color="#000" stop-opacity="0.35"/></radialGradient></defs>
 <circle cx="182" cy="70" r="9" fill="url(#ballhl)" stroke="#5a2a10" stroke-width="0.6"/>
 <!-- filter -->
 <path d="M8.5 93.5 L24.5 93.5 L24.5 96.5 L18.5 103 L18.5 109.5 L15 108 L15 103 L8.5 96.5 Z" fill="#f2f2f2" stroke="#222" stroke-width="1"/>
 <rect x="8" y="92.8" width="17" height="3.6" rx="1.6" fill="#8fd0ee" stroke="#0f4f78" stroke-width="1"/>
 <path d="M26.5 103.5 L31 103.5 L28.75 106 Z" fill="#333"/>
</svg>
<!-- coordinate triad -->
<svg class="abs" style="left:440px;top:780px" width="80" height="90" viewBox="440 780 80 90">
 <path d="M459 812 L464.5 838" stroke="#c80000" stroke-width="3.2" stroke-linecap="round"/>
 <path d="M460 836 L467.5 837 L464.8 846 Z" fill="#c01010"/>
 <path d="M463 840 L466.5 840 L464.8 846 Z" fill="#ff8a8a"/>
 <path d="M459 811 L486 806.5" stroke="#00008a" stroke-width="3.2"/>
 <path d="M484 802.5 L496 805 L486.5 810.5 Z" fill="#00008a"/>
 <path d="M456.5 800.5 L459.5 804 L462.5 800.5 M459.5 804 L459.5 809" fill="none" stroke="#44dd44" stroke-width="1"/>
 <path d="M501.5 797.5 L507 797.5 L501.5 803.5 L507 803.5" fill="none" stroke="#1010ff" stroke-width="1"/>
 <path d="M464.5 848.5 L470.5 855 M470.5 848.5 L464.5 855" fill="none" stroke="#ff6060" stroke-width="1"/>
</svg>
<svg class="abs" style="left:0;top:0" width="1920" height="879" viewBox="0 0 1920 879">
<g stroke="#000" stroke-width="1.4" stroke-linejoin="round">
 <!-- lower arm -->
 <path d="M1124 209 Q1127.5 205 1131.5 208 L1175 202 Q1179 197 1183 201 L1218 412 L1219 430 L1151 430 L1151 425 Z" fill="#5c5c5c"/>
 <!-- top window -->
 <path d="M1135.6 235 L1177.5 229 L1183.6 254.3 L1139 261.7 Z" fill="#fff" stroke-width="1.2"/>
 <path d="M1148.8 235 L1168 232 L1170 256 L1151 259 Z" fill="#bdbdbd" stroke-width="0.9"/>
 <!-- servo horn block -->
 <path d="M1145.8 315 L1193 308.4 L1201 360.6 L1152 367 Z" fill="#5c5c5c" stroke-width="1.2"/>
 <path d="M1161 312.6 L1171 368 M1177 310.3 L1186 362" fill="none" stroke-width="1"/>
 <!-- bottom window -->
 <path d="M1152 367 L1201 360.6 L1211 420 L1159 425 Z" fill="#fff" stroke="none"/>
 <path d="M1169 365 L1185 363 L1194 425 L1177 425 Z" fill="#b5b5b5" stroke-width="1"/>
 <path d="M1145.8 315 L1159 425 M1193 308.4 L1211 415" fill="none" stroke-width="1.2"/>
 <!-- light block under left finger -->
 <path d="M1099.6 160 L1124 156 L1124.5 175 L1100.5 176.5 Z" fill="#6e6e6e" stroke-width="1"/>
 <!-- upper arm / neck -->
 <path d="M1120 155 Q1114 166 1127.7 172.8 L1136 237 Q1156 240 1176 232 L1167.7 164.2 Q1176 161 1172 153 L1150 150 Z" fill="#5c5c5c"/>
 <path d="M1134.5 224 Q1156 222 1175 218" fill="none" stroke-width="1.2"/>
 <path d="M1126.3 186 L1128.6 185.5 L1129.8 197 L1127.6 197.5 Z" fill="#a0a0a0" stroke="#555" stroke-width="0.7"/>
 <!-- clevis plate overlays -->
 <path d="M1123.5 210 Q1127.5 204 1131.5 208 L1138.5 262 L1130.5 264 Z" fill="#5a5a5a" stroke="none"/>
 <path d="M1130.5 264 L1123.5 210 Q1127.5 204 1131.5 208 L1138.5 262" fill="none" stroke-width="1.2"/>
 <path d="M1174.5 203 Q1179 197 1183 201 L1191 252 L1182.5 253 Z" fill="#5a5a5a" stroke="none"/>
 <path d="M1182.5 253 L1174.5 203 Q1179 197 1183 201 L1191 252" fill="none" stroke-width="1.2"/>
 <!-- bolts -->
 <path d="M1116 221 Q1119 218 1123.5 219 L1125 234 Q1120 237 1117.5 235 Z" fill="#a3a3a3" stroke="#444" stroke-width="0.9"/>
 <path d="M1184 209 Q1188 207 1190 210 L1191 224 Q1188 226 1185.5 225 Z" fill="#a3a3a3" stroke="#444" stroke-width="0.9"/>
 <!-- gripper back blocks -->
 <path d="M1086 112.3 L1106 108.5 L1106 126.4 L1087.7 126.4 Z" fill="#505050"/>
 <path d="M1091 129.6 L1106 127.4 L1106 143.6 L1093 143.6 Z" fill="#3e3e3e"/>
 <!-- gripper disc -->
 <ellipse cx="1140.7" cy="122.5" rx="35.7" ry="35.5" fill="#595959"/>
 <ellipse cx="1141" cy="122" rx="31.5" ry="31.5" fill="none" stroke-width="1.1"/>
 <circle cx="1140" cy="125" r="18.5" fill="none" stroke-width="1"/>
 <path d="M1131 112 L1122.5 134 M1149 112 L1158 134 M1128 141 L1152 141" fill="none" stroke-width="1"/>
 <ellipse cx="1141" cy="147" rx="4" ry="1.6" fill="#9a968e" stroke="none"/>
 <!-- top finger -->
 <path d="M1120 47.5 L1137 45 L1143.5 88 L1144.5 95 L1141 105 L1144 120.5 L1136.5 123 L1132 106 L1126.5 95 L1128 90 Z" fill="#4e4e4e"/>
 <path d="M1123 61 L1139.5 59 M1125 68 L1141 66 M1127.5 87 L1143.5 85" fill="none" stroke-width="0.9"/>
 <path d="M1130 95 Q1135 104 1137 106 Q1140 101 1141.5 93 L1136 91 Z" fill="#6e6e6e" stroke-width="0.8"/>
 <!-- left finger -->
 <path d="M1129.9 125.8 L1136.4 131.8 L1124.5 151.2 L1082.3 181.5 L1073.6 168.5 L1115.8 132.8 Z" fill="#474747"/>
 <path d="M1115.8 132.8 L1124.5 151.2 M1094 155 L1101.5 168 M1086 162 L1093.5 175" fill="none" stroke-width="0.9"/>
 <path d="M1113 150 Q1104 152 1100 160 Q1107 161 1116 155 Z" fill="#6a6a6a" stroke-width="0.8"/>
 <path d="M1129.9 125.8 L1136.4 131.8 L1128 143 L1121.5 137.5 Z" fill="#555" stroke-width="1"/>
 <!-- right finger -->
 <path d="M1147.2 126.4 L1153.6 122.6 L1165.5 126.4 L1218.5 148 L1215.3 162 L1162.3 141.5 L1160.1 140.4 Z" fill="#474747"/>
 <path d="M1165.5 126.4 L1162.3 141.5 M1186 134 L1183 150 M1200 140 L1197 155" fill="none" stroke-width="0.9"/>
 <path d="M1172 139 Q1178 133 1190 138 Q1184 146 1174 144 Z" fill="#6a6a6a" stroke-width="0.8"/>
 <path d="M1147.2 126.4 L1153.6 122.6 L1165.5 130.7 L1160.1 140.4 Z" fill="#555" stroke-width="1"/>
 <!-- outer disc -->
 <circle cx="1209" cy="561" r="152" fill="#5c5c5c" stroke-width="1.6"/>
 <!-- bottom plate -->
 <path d="M1160.5 706.7 L1189 724.2 L1276.8 709.9 L1299 683.6 L1290 660 L1170 660 Z" fill="#5c5c5c" stroke="none"/>
 <path d="M1160.5 706.7 L1189 724.2 L1276.8 709.9 L1299 683.6" fill="none" stroke-width="1.3"/>
 <path d="M1162 699.5 L1190 713.9 L1274.4 700.3 L1294.3 679.6 L1295 685 L1275 706 L1190 719 L1161 705 Z" fill="#4d4d4d" stroke-width="1.1"/>
</g>
<g fill="none" stroke="#000" stroke-width="1.1">
 <!-- inner rim with lugs -->
 <path d="M1329.9 629.5 A17 17 0 0 1 1311.4 655.0 A139 139 0 0 1 1138.4 680.8 A17 17 0 0 1 1113.5 662.0 A139 139 0 0 1 1088.3 492.1 A17 17 0 0 1 1107.6 465.9 A139 139 0 0 1 1277.8 440.2 A17 17 0 0 1 1303.4 459.0 A139 139 0 0 1 1329.9 629.5 Z"/>
</g>
<g fill="#fff" stroke="#000" stroke-width="1">
 <circle cx="1102" cy="482" r="5"/>
 <circle cx="1287" cy="454.5" r="5"/>
 <circle cx="1315.5" cy="638.5" r="5"/>
 <circle cx="1130" cy="666" r="5"/>
</g>
<g stroke="#000" stroke-width="1.4" stroke-linejoin="round">
 <!-- rotating base teardrop -->
 <path d="M1117 558 A92 92 0 0 1 1161 482 L1231 472 A91 91 0 0 1 1300 556 L1294.3 679.6 L1274.4 700.3 L1190 713.9 L1162 699.5 Z" fill="#5c5c5c" stroke="none"/>
 <path d="M1162 699.5 L1117 558 A92 92 0 0 1 1161 482 M1231 472 A91 91 0 0 1 1300 556 L1294.3 679.6" fill="none"/>
 <path d="M1162 699.5 L1190 713.9 L1274.4 700.3 L1294.3 679.6" fill="none" stroke-width="1.1"/>
 <!-- bearing -->
 <ellipse cx="1208" cy="559" rx="60" ry="55" fill="#3e3e3e"/>
 <ellipse cx="1208" cy="559" rx="56" ry="51.3" fill="none" stroke="#8a8a8a" stroke-width="1.2" stroke-dasharray="1.5 2"/>
 <ellipse cx="1208" cy="559" rx="52.5" ry="48.3" fill="none" stroke="#1a1a1a" stroke-width="1" />
 <ellipse cx="1208" cy="559" rx="49.5" ry="46" fill="#b5b8bb" stroke-width="1.2"/>
 <!-- arm strip -->
 <path d="M1161 482 L1174.6 568 A35 35 0 0 0 1242.8 572 L1231 472 Z" fill="#5c5c5c" stroke="none"/>
 <path d="M1161 482 L1174.6 568 A35 35 0 0 0 1242.8 572 L1231 472" fill="none"/>
 <!-- hub -->
 <circle cx="1209" cy="560" r="28.5" fill="#565656"/>
 <circle cx="1209" cy="560" r="23.3" fill="#4e4e4e" stroke="#a9b5bb" stroke-width="1.6"/>
 <circle cx="1209" cy="560" r="20" fill="none" stroke="#8a8f92" stroke-width="1.2" stroke-dasharray="1.5 1.5"/>
 <circle cx="1209" cy="560" r="17.3" fill="#a39f99" stroke-width="1.3"/>
 <path d="M1209.1 550.5 L1218.3 555.7 L1218.3 565.8 L1208.6 570.5 L1199.8 565.2 L1200.3 555.2 Z" fill="#a39f99" stroke-width="1.1"/>
 <path d="M1178.5 584 A5 5 0 0 0 1187 589" fill="#8e8a84" stroke-width="1"/>
 <path d="M1244 572.5 A5 5 0 0 1 1239 581" fill="#8e8a84" stroke-width="1"/>
 <!-- servo -->
 <path d="M1175.6 644 L1264.4 630.4 L1266 639.5 L1177.9 652.6 Z" fill="#6a6a6a" stroke-width="1"/>
 <path d="M1176 645 L1184 643.8 L1184.8 651.5 L1177.6 652.3 Z" fill="#fff" stroke="none"/>
 <path d="M1256 632 L1264.2 631 L1265.6 639 L1258 640.3 Z" fill="#fff" stroke="none"/>
 <path d="M1185 645.5 L1230 638.5 M1232 638 Q1245 634 1255 636" fill="none" stroke="#e8e8e8" stroke-width="1"/>
 <path d="M1186 649 Q1190 645 1194 648 Q1198 644 1202 647 Q1206 643 1210 646 L1215 645" fill="none" stroke-width="1.2"/>
 <path d="M1163.7 656 L1177.9 652.6 L1266 639.5 L1266.6 645 L1179 658.2 L1184 695.8 L1170 697.5 Z" fill="#0a2a9a" stroke="#000" stroke-width="1.1"/>
 <path d="M1267 639.5 L1281 639 L1286 680 L1273.5 682.7 Z" fill="#454545" stroke-width="1.1"/>
 <path d="M1179 658.2 L1266.6 645 L1274 689 L1185.3 701.5 Z" fill="#5c5c5c" stroke-width="1.1"/>
 <path d="M1185.3 701.5 L1274 689" fill="none" stroke="#fff" stroke-width="1.6" stroke-dasharray="3 2.5"/>
 <circle cx="1170.5" cy="665.6" r="6.3" fill="#3a3a3a" stroke="#111" stroke-width="1.2" stroke-dasharray="1 0.8"/>
 <circle cx="1170.5" cy="665.6" r="4.3" fill="#a8a49c" stroke="#1a1a1a" stroke-width="0.9"/>
 <circle cx="1170.5" cy="665.6" r="1.7" fill="#8d8a85" stroke="none"/>
 <circle cx="1173.9" cy="687.8" r="6.3" fill="#3a3a3a" stroke="#111" stroke-width="1.2" stroke-dasharray="1 0.8"/>
 <circle cx="1173.9" cy="687.8" r="4.3" fill="#a8a49c" stroke="#1a1a1a" stroke-width="0.9"/>
 <circle cx="1173.9" cy="687.8" r="1.7" fill="#8d8a85" stroke="none"/>
 <circle cx="1276.3" cy="649.1" r="6.3" fill="#3a3a3a" stroke="#111" stroke-width="1.2" stroke-dasharray="1 0.8"/>
 <circle cx="1276.3" cy="649.1" r="4.3" fill="#a8a49c" stroke="#1a1a1a" stroke-width="0.9"/>
 <circle cx="1276.3" cy="649.1" r="1.7" fill="#8d8a85" stroke="none"/>
 <circle cx="1280.3" cy="671.3" r="6.3" fill="#3a3a3a" stroke="#111" stroke-width="1.2" stroke-dasharray="1 0.8"/>
 <circle cx="1280.3" cy="671.3" r="4.3" fill="#a8a49c" stroke="#1a1a1a" stroke-width="0.9"/>
 <circle cx="1280.3" cy="671.3" r="1.7" fill="#8d8a85" stroke="none"/>

</g>
</svg>

</body></html>
